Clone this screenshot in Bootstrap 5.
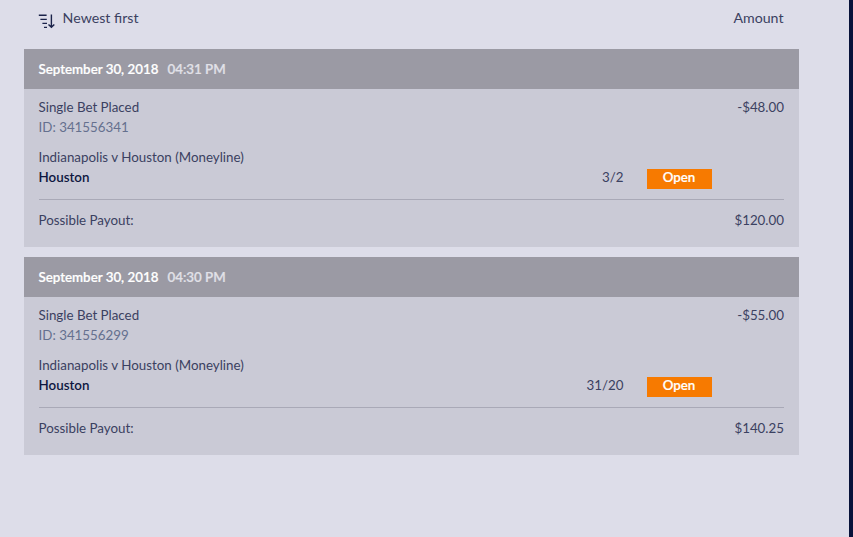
<!DOCTYPE html>
<html lang="en">
<head>
<meta charset="utf-8">
<meta name="viewport" content="width=device-width, initial-scale=1">
<title>Bet history</title>
<link href="https://cdn.jsdelivr.net/npm/bootstrap@5.3.0/dist/css/bootstrap.min.css" rel="stylesheet">
<style>
body{font-family:Lato,sans-serif;font-size:13.35px;line-height:20px;color:#3b4161;background:#dddde9}
.page{height:537px;border-right:4px solid #07123a;padding-left:24px;padding-right:50px}
.sort-bar{height:49px;padding:8px 15.5px 0 14px;font-size:14.2px}
.sort-icon{width:18px;height:18px;margin:3px 6.6px 0 0;stroke:#1a2249}
.bet{background:#cacad6;margin-bottom:10px}
.bet-head{height:40px;background:#9b9aa4;color:#fff;padding:0 14.4px;font-size:13.34px;-webkit-text-stroke:.2px currentColor}
.bet-time{color:#e1e1e8;margin-left:9px}
.bet-body{height:158px;padding:8px 15px 0 14.5px}
.bet-id{color:#65708e}
.bet-event{margin-top:10px}
.bet-pick{color:#0d1640}
.bet-odds{margin-right:23.5px}
.bet-state{width:65px;height:20px;line-height:17px;margin:2px 72px -2px 0;background:#f77a00;color:#fff;padding-right:1px;-webkit-text-stroke:.2px currentColor}
.bet-payout{border-top:1px solid #a9a9b7;margin-top:12px;padding-top:10px}
</style>
<script src="https://cdn.jsdelivr.net/npm/bootstrap@5.3.0/dist/js/bootstrap.bundle.min.js"></script>
</head>
<body>
<main class="page overflow-hidden">
  <header class="sort-bar d-flex justify-content-between">
    <div class="d-flex align-items-start">
      <svg class="sort-icon" viewBox="0 0 18 18" fill="none" stroke-width="1.4"><path d="M.8 4.3H8.6M2.4 8.4H8.8M4.4 12.4H9M6 16.4H9M13.4 3.6V16.2M10.5 13.4L13.4 16.3L16.3 13.4"/></svg>
      <span>Newest first</span>
    </div>
    <span>Amount</span>
  </header>
  <section class="bet">
    <div class="bet-head d-flex align-items-center fw-semibold"><span class="bet-date">September 30, 2018</span><span class="bet-time">04:31 PM</span></div>
    <div class="bet-body">
      <div class="d-flex justify-content-between"><span>Single Bet Placed</span><span>-$48.00</span></div>
      <div class="bet-id">ID: 341556341</div>
      <div class="bet-event">Indianapolis v Houston (Moneyline)</div>
      <div class="d-flex"><span class="bet-pick fw-semibold me-auto">Houston</span><span class="bet-odds">3/2</span><span class="bet-state fw-semibold text-center">Open</span></div>
      <div class="bet-payout d-flex justify-content-between"><span>Possible Payout:</span><span>$120.00</span></div>
    </div>
  </section>
  <section class="bet">
    <div class="bet-head d-flex align-items-center fw-semibold"><span class="bet-date">September 30, 2018</span><span class="bet-time">04:30 PM</span></div>
    <div class="bet-body">
      <div class="d-flex justify-content-between"><span>Single Bet Placed</span><span>-$55.00</span></div>
      <div class="bet-id">ID: 341556299</div>
      <div class="bet-event">Indianapolis v Houston (Moneyline)</div>
      <div class="d-flex"><span class="bet-pick fw-semibold me-auto">Houston</span><span class="bet-odds">31/20</span><span class="bet-state fw-semibold text-center">Open</span></div>
      <div class="bet-payout d-flex justify-content-between"><span>Possible Payout:</span><span>$140.25</span></div>
    </div>
  </section>
</main>
</body>
</html>
